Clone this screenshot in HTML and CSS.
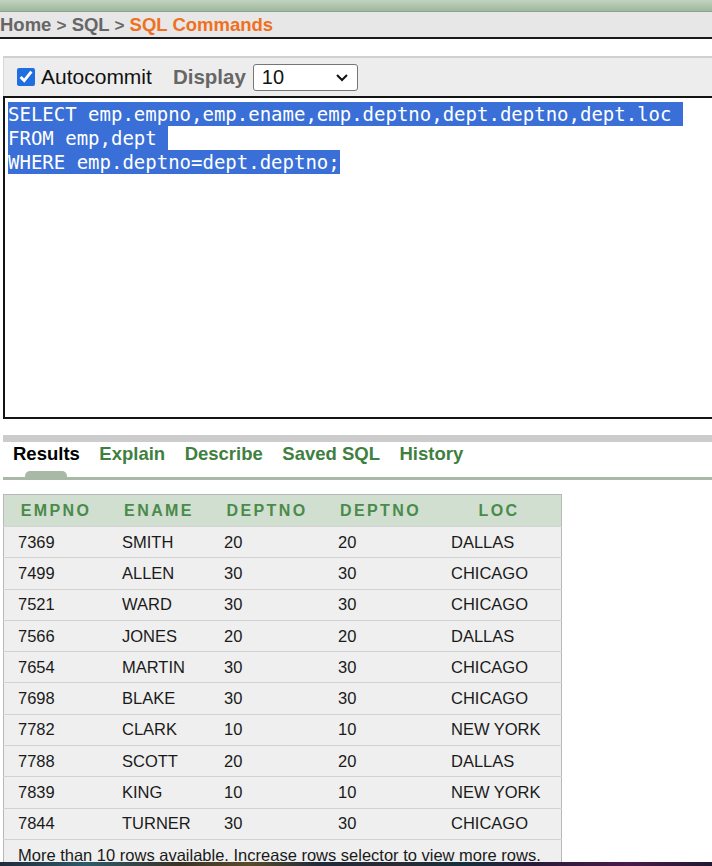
FILE: index.html
```html
<!DOCTYPE html>
<html lang="en">
<head>
<meta charset="utf-8">
<title>SQL Commands</title>
<link rel="stylesheet" href="styles.css">
</head>
<body>
<div class="topbar"></div>
<div class="breadcrumb"><span class="crumb">Home</span> <span class="sep">&gt;</span> <span class="crumb">SQL</span> <span class="sep">&gt;</span> <span class="current">SQL Commands</span></div>
<div class="main">
  <div class="toolbar">
    <label class="autocommit"><input type="checkbox" class="check" checked> Autocommit</label>
    <span class="display-label">Display</span>
    <span class="select"><span class="select-value">10</span><svg class="chevron" width="14" height="9" viewBox="0 0 14 9"><path d="M2 2 L7 7 L12 2" fill="none" stroke="#111" stroke-width="2"/></svg></span>
  </div>
  <div class="editor"><div class="line"><span class="sel">SELECT emp.empno,emp.ename,emp.deptno,dept.deptno,dept.loc </span></div><div class="line"><span class="sel">FROM emp,dept </span></div><div class="line"><span class="sel">WHERE emp.deptno=dept.deptno;</span></div></div>
  <div class="divider"></div>
  <nav class="tabs">
    <span class="tab active">Results<span class="pill"></span></span>
    <span class="tab">Explain</span>
    <span class="tab">Describe</span>
    <span class="tab">Saved SQL</span>
    <span class="tab">History</span>
  </nav>
  <div class="tab-rule"></div>
  <table class="results">
    <thead>
      <tr><th class="c1">EMPNO</th><th class="c2">ENAME</th><th class="c3">DEPTNO</th><th class="c4">DEPTNO</th><th class="c5">LOC</th></tr>
    </thead>
    <tbody>
      <tr><td>7369</td><td>SMITH</td><td>20</td><td>20</td><td>DALLAS</td></tr>
      <tr><td>7499</td><td>ALLEN</td><td>30</td><td>30</td><td>CHICAGO</td></tr>
      <tr><td>7521</td><td>WARD</td><td>30</td><td>30</td><td>CHICAGO</td></tr>
      <tr><td>7566</td><td>JONES</td><td>20</td><td>20</td><td>DALLAS</td></tr>
      <tr><td>7654</td><td>MARTIN</td><td>30</td><td>30</td><td>CHICAGO</td></tr>
      <tr><td>7698</td><td>BLAKE</td><td>30</td><td>30</td><td>CHICAGO</td></tr>
      <tr><td>7782</td><td>CLARK</td><td>10</td><td>10</td><td>NEW YORK</td></tr>
      <tr><td>7788</td><td>SCOTT</td><td>20</td><td>20</td><td>DALLAS</td></tr>
      <tr><td>7839</td><td>KING</td><td>10</td><td>10</td><td>NEW YORK</td></tr>
      <tr><td>7844</td><td>TURNER</td><td>30</td><td>30</td><td>CHICAGO</td></tr>
      <tr class="footer-row"><td colspan="5">More than 10 rows available. Increase rows selector to view more rows.</td></tr>
    </tbody>
  </table>
</div>
<div class="taskbar"></div>
</body>
</html>
```
FILE: styles.css
```css
html, body {
  margin: 0;
  padding: 0;
  background: #ffffff;
  overflow: hidden;
  font-family: "Liberation Sans", Arial, sans-serif;
}

.topbar {
  height: 11px;
  background: linear-gradient(#c0d4bf, #9fb79e);
  border-bottom: 1px solid #8ea58d;
}

.breadcrumb {
  height: 25px;
  background: #e7e7e7;
  border-bottom: 2px solid #1a1a1a;
  font-size: 18.5px;
  font-weight: bold;
  line-height: 25px;
  color: #666666;
  white-space: nowrap;
}

.breadcrumb .sep {
  font-size: 17px;
}

.breadcrumb .current {
  color: #f0701e;
}

.main {
  padding: 17px 0 0 3px;
}

.toolbar {
  display: flex;
  align-items: center;
  height: 38px;
  background: #ededed;
  border-top: 2px solid #d0d0d0;
  border-left: 1px solid #d6d6d6;
  padding-left: 13px;
  font-size: 21px;
}

.autocommit {
  display: flex;
  align-items: center;
  color: #111;
}

.check {
  width: 18px;
  height: 18px;
  margin: 0 6px 0 0;
  accent-color: #1f6fe0;
}

.display-label {
  margin-left: 21px;
  font-size: 20.5px;
  font-weight: bold;
  color: #666666;
}

.select {
  display: flex;
  align-items: center;
  justify-content: space-between;
  box-sizing: border-box;
  width: 105px;
  height: 27px;
  margin-left: 7px;
  padding: 0 8px 0 8px;
  background: #ffffff;
  border: 1px solid #767676;
  border-radius: 3px;
  font-size: 20px;
  color: #111;
}

.editor {
  box-sizing: border-box;
  height: 323px;
  border: 2px solid #141414;
  border-right: none;
  padding: 4px 3px;
  font-family: "DejaVu Sans Mono", "Liberation Mono", monospace;
  font-size: 19px;
  line-height: 24px;
  white-space: pre;
  background: #ffffff;
  overflow: hidden;
}

.line {
  height: 24px;
}

.sel {
  display: inline-block;
  background: #3a6fd8;
  color: #ffffff;
  height: 24px;
}

.divider {
  height: 7px;
  margin-top: 16px;
  background: #cccccc;
}

.tabs {
  display: flex;
  gap: 19.5px;
  height: 35px;
  padding-left: 10px;
  font-size: 18.5px;
  font-weight: bold;
  line-height: 23px;
}

.tab {
  color: #3f7f3f;
  position: relative;
}

.tab.active {
  color: #000000;
}

.pill {
  position: absolute;
  left: 12px;
  top: 29px;
  width: 42px;
  height: 6px;
  background: #a8baa6;
  border-radius: 5px 5px 0 0;
}

.tab-rule {
  height: 3px;
  background: #a8baa6;
}

.results {
  margin-top: 14px;
  border-collapse: collapse;
  border: 1px solid #b8b8b8;
  width: 559px;
  table-layout: fixed;
  background: #efefef;
}

.results th {
  height: 31px;
  padding: 0;
  background: #d1dfd1;
  color: #4a8a4a;
  font-size: 16px;
  font-weight: bold;
  letter-spacing: 2.4px;
  text-align: center;
}

.results td {
  height: 30.3px;
  padding: 0 0 0 14px;
  border-top: 1px solid #d2d2d2;
  font-size: 16.5px;
  color: #1a1a1a;
  white-space: nowrap;
}

.results .c1 { width: 104px; }
.results .c2 { width: 102px; }
.results .c3 { width: 114px; }
.results .c4 { width: 113px; }
.results .c5 { width: 124px; }

.footer-row td {
  height: 34px;
  vertical-align: top;
  padding-top: 6px;
  box-sizing: border-box;
}

.taskbar {
  position: fixed;
  left: 0;
  right: 0;
  bottom: 0;
  height: 4px;
  background: linear-gradient(90deg, #1f2a3a 0%, #2d5a6a 12%, #3a3226 25%, #5a4a2a 35%, #1f2a3a 45%, #2a2a34 55%, #14303c 65%, #2a1a3a 75%, #4a1a4a 88%, #221830 100%);
}
```
